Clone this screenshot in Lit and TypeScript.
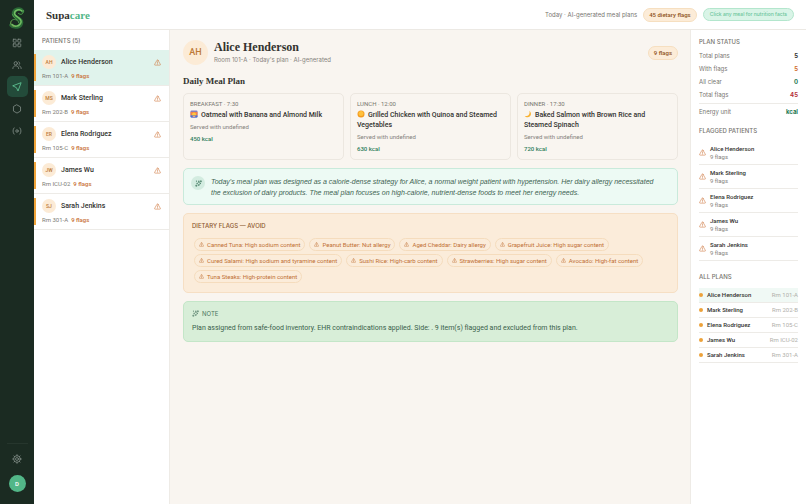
import { LitElement, html, css, svg } from "lit";
import { customElement, state } from "lit/decorators.js";
import { classMap } from "lit/directives/class-map.js";

interface Patient { name: string; initials: string; room: string; flags: number; }
interface Meal { slot: string; time: string; icon: unknown; title: string; kcal: number; }

const patients: Patient[] = [
  { name: "Alice Henderson", initials: "AH", room: "101-A", flags: 9 },
  { name: "Mark Sterling", initials: "MS", room: "202-B", flags: 9 },
  { name: "Elena Rodriguez", initials: "ER", room: "105-C", flags: 9 },
  { name: "James Wu", initials: "JW", room: "ICU-02", flags: 9 },
  { name: "Sarah Jenkins", initials: "SJ", room: "301-A", flags: 9 },
];

const line = (body: unknown) => html`<svg class="icon" viewBox="0 0 24 24" aria-hidden="true">${body}</svg>`;

const warning = line(svg`<path d="M13.7 4.2 21.6 18a2 2 0 0 1-1.700 3H4.100a2 2 0 0 1-1.700-3L10.300 4.200a2 2 0 0 1 3.400 0Z"/><path d="M12 9.500v4.500M12 17.200v.3"/>`);
const sparkle = line(svg`<path d="M13 4c.6 5 2 7 7.500 8-5.500 1-6.900 3-7.500 8-.6-5-2-7-7.500-8 5.500-1 6.900-3 7.500-8Z"/><path d="M20 2v5M17.500 4.500h5M4.500 17v5M2 19.500h5M5 3v3"/>`);
const grid = line(svg`<rect x="3" y="3" width="7" height="7" rx="1"/><rect x="14" y="3" width="7" height="7" rx="1"/><rect x="3" y="14" width="7" height="7" rx="1"/><rect x="14" y="14" width="7" height="7" rx="1"/>`);
const people = line(svg`<circle cx="9" cy="8" r="4"/><path d="M2 20.500c0-4 3-6.500 7-6.500s7 2.500 7 6.500M16 4.300a4 4 0 0 1 0 7.400M18.500 14.500c2.300 1 3.500 3.200 3.500 6"/>`);
const send = line(svg`<path d="M21.500 2.500 14.500 21.500l-4-8-8-4Z"/>`);
const hexagon = line(svg`<path d="M12 2.200 20.500 7v10L12 21.800 3.500 17V7Z"/>`);
const signal = line(svg`<circle cx="12" cy="12" r="3"/><path d="M5 4.500c-3.500 4-3.500 11 0 15M19 4.500c3.500 4 3.500 11 0 15"/>`);
const gear = line(svg`<circle cx="12" cy="12" r="3.500"/><circle cx="12" cy="12" r="8"/><path d="M12 1.500V4M12 20v2.500M1.500 12H4M20 12h2.500M4.600 4.600l1.700 1.700M17.700 17.700l1.700 1.700M4.600 19.400l1.700-1.700M17.700 6.300l1.700-1.700"/>`);

const sunrise = html`<svg class="emoji" viewBox="0 0 16 16" aria-hidden="true">
  <rect x="1" y="1" width="14" height="14" rx="2" fill="#8a7fb8"/><path d="M1 4h14v7H1Z" fill="#f5824b"/>
  <circle cx="8" cy="9" r="4" fill="#ffc83d"/><path d="M1 11h14v2a2 2 0 0 1-2 2H3a2 2 0 0 1-2-2Z" fill="#4a6fd0"/><path d="M5 12h6l-1 2H6Z" fill="#f0a08a"/></svg>`;
const sun = html`<svg class="emoji" viewBox="0 0 16 16" aria-hidden="true">
  <circle cx="8" cy="8" r="7" fill="#f39a1e"/><circle cx="8" cy="7" r="5" fill="#ffc03c"/></svg>`;
const moon = html`<svg class="emoji" viewBox="0 0 16 16" aria-hidden="true">
  <path d="M10.500 1.500c4 3 4.500 8 1.500 11s-8 2.500-10.500-.5c4 .5 7-.5 8.500-3s1.500-5 .5-7.500Z" fill="#f9b233"/></svg>`;

const meals: Meal[] = [
  { slot: "BREAKFAST", time: "7:30", icon: sunrise, title: "Oatmeal with Banana and Almond Milk", kcal: 450 },
  { slot: "LUNCH", time: "12:00", icon: sun, title: "Grilled Chicken with Quinoa and Steamed Vegetables", kcal: 630 },
  { slot: "DINNER", time: "17:30", icon: moon, title: "Baked Salmon with Brown Rice and Steamed Spinach", kcal: 720 },
];

const avoid = [
  "Canned Tuna: High sodium content", "Peanut Butter: Nut allergy", "Aged Cheddar: Dairy allergy",
  "Grapefruit Juice: High sugar content", "Cured Salami: High sodium and tyramine content",
  "Sushi Rice: High-carb content", "Strawberries: High sugar content", "Avocado: High-fat content",
  "Tuna Steaks: High-protein content",
];

const nav = [
  { label: "Dashboard", icon: grid }, { label: "Patients", icon: people }, { label: "Meal plans", icon: send },
  { label: "Inventory", icon: hexagon }, { label: "Monitoring", icon: signal },
];

const shared = css`
  *, *::before { box-sizing: border-box; }
  h1, h2, h3, p, ul, dl, dd { margin: 0; padding: 0; }
  ul { list-style: none; }
  button { font: inherit; color: inherit; background: none; border: 0; margin: 0; padding: 0; text-align: left; cursor: pointer; }
  .icon { display: block; flex: none; width: 7px; height: 7px; fill: none; stroke: currentColor; stroke-width: 2; stroke-linecap: round; stroke-linejoin: round; }
  .label { font: 500 6px/8px Inter, sans-serif; color: #77756f; }
  .pill { flex: none; border: 1px solid #f6dfc0; border-radius: 8px; background: #fcecd8; color: #8f5220; font: 500 6px/12px Roboto, sans-serif; padding: 0 5px; }
`;

@customElement("side-nav")
export class SideNav extends LitElement {
  static styles = [shared, css`
    :host { display: flex; flex-direction: column; align-items: center; width: 34px; padding: 7px 0 12px; background: #1b2b22; color: #7f8c85; }
    .logo { width: 18px; height: 22px; margin-bottom: 3px; }
    .items { display: flex; flex-direction: column; gap: 1px; }
    .item { display: grid; place-items: center; width: 21px; height: 21px; border-radius: 5px; color: inherit; }
    .item.on { background: #234b3a; color: #62c997; }
    .icon { width: 10px; height: 10px; }
    .foot { display: flex; flex-direction: column; align-items: center; gap: 6px; margin-top: auto; padding-top: 4px; border-top: 1px solid #26362d; }
    .user { width: 17px; height: 17px; border-radius: 50%; background: #52b788; color: #fff; font: 500 6px/17px Roboto, sans-serif; text-align: center; }
  `];
  render() {
    return html`
      <svg class="logo" viewBox="0 0 36 44" role="img" aria-label="Supacare">
        <path d="M29 8C25 1 12 4 11 13s17 8 16 18-15 12-21 5" fill="none" stroke="#2b6b37" stroke-width="7" stroke-linecap="round"/>
        <path d="M28 8C23 3 13 6 13 13s16 9 13 18-14 9-18 4" fill="none" stroke="#72bf63" stroke-width="3" stroke-linecap="round"/>
        <path d="M31 7c0 9-6 9-10 6M5 34c-1-8 6-11 12-8M9 15c1 9 12 8 13 17" fill="none" stroke="#4c9c4b" stroke-width="2" stroke-linecap="round"/>
        <path d="M8 27c-5 6-1 12 6 12" fill="none" stroke="#8a8f4c" stroke-width="1"/>
      </svg>
      <nav class="items" aria-label="Main">
        ${nav.map((n, i) => html`<a class=${classMap({ item: true, on: i === 2 })} href="#" aria-label=${n.label}>${n.icon}</a>`)}
      </nav>
      <div class="foot">
        <button class="item" aria-label="Settings">${gear}</button>
        <button class="user" aria-label="Account">D</button>
      </div>`;
  }
}

@customElement("app-root")
export class AppRoot extends LitElement {
  @state() selected = 0;

  static styles = [shared, css`
    :host { display: flex; min-height: 100vh; background: #fff; color: #33332f; font: 400 7px/10px Roboto, sans-serif; }
    side-nav { flex: none; }
    .page { flex: 1; min-width: 0; display: flex; flex-direction: column; }
    header { display: flex; align-items: center; gap: 6px; height: 30px; padding: 0 12px; border-bottom: 1px solid #ece9e4; }
    .brand { font: 700 11px/14px "Liberation Serif", serif; margin-right: auto; }
    .brand .tail { color: #52b788; }
    .today { font: 400 6px/9px Inter, sans-serif; color: #77756f; }
    .pill.hint { padding: 0 6px; border-color: #b3e6cd; background: #d9f4e7; color: #6cc59b; font: 500 5px/11px Inter, sans-serif; }
    .body { flex: 1; display: grid; grid-template-columns: 136px minmax(0, 1fr) 116px; }

    .list { border-right: 1px solid #eeebe6; }
    .list .label { padding: 7px 8px 5px; }
    .patient { position: relative; display: flex; flex-direction: column; gap: 2px; width: 100%; padding: 5px 8px; border-bottom: 1px solid #edebe7; }
    .patient::before { content: ""; position: absolute; left: 0; top: 4px; bottom: 4px; width: 2px; background: #f0a43a; }
    .patient.on { background: #e0f3ec; }
    .who { display: flex; align-items: center; gap: 5px; font-weight: 500; }
    .who .icon { margin-left: auto; color: #d07a42; }
    .face { flex: none; width: 14px; height: 14px; border-radius: 50%; background: #fcebd6; color: #bd7a38; font: 500 5px/14px Roboto, sans-serif; text-align: center; }
    .meta { display: flex; gap: 3px; font-size: 6px; line-height: 9px; color: #7d7b76; }
    .meta .count { color: #c87034; font-weight: 500; }

    main { display: flex; flex-direction: column; gap: 8px; padding: 10px 12px 10px 13px; background: #f9f5f0; }
    .head { display: flex; align-items: center; gap: 6px; margin-bottom: 2px; }
    .head .face { width: 25px; height: 25px; font-size: 9px; line-height: 25px; }
    .head h1 { font: 700 12px/15px "Liberation Serif", serif; }
    .head .sub { font: 400 6px/10px Inter, sans-serif; color: #85827c; }
    .head .pill { margin-left: auto; }
    h2.plan { font: 700 9px/12px "Liberation Serif", serif; margin-bottom: -2px; }
    .meals { display: grid; grid-template-columns: repeat(3, minmax(0, 1fr)); gap: 6px; }
    .meal { display: flex; flex-direction: column; justify-content: flex-start; padding: 6px; border: 1px solid #ece7e0; border-radius: 5px; }
    .meal .label { font: 400 6px/8px Roboto, sans-serif; }
    .meal .title { margin: 2px 0; font-weight: 500; }
    .emoji { width: 8px; height: 8px; margin-right: 3px; vertical-align: -1px; }
    .meal .with { font-size: 6px; line-height: 9px; color: #85827c; }
    .meal .kcal { margin-top: 3px; font-size: 6px; line-height: 9px; font-weight: 500; color: #2d7d5a; }
    .summary { display: flex; gap: 6px; padding: 7px 16px 6px 7px; border: 1px solid #c9eadb; border-radius: 5px; background: #edfaf4; color: #3d6352; font: italic 400 7px/11px "Liberation Sans", sans-serif; }
    .spark { flex: none; display: grid; place-items: center; width: 14px; height: 14px; border-radius: 50%; background: #d3ece0; color: #2d6a4f; }
    .flags { padding: 8px; border: 1px solid #f6dfc4; border-radius: 5px; background: #fbecda; }
    .flags .label { color: #8f5a30; }
    .chips { display: flex; flex-wrap: wrap; gap: 3px 4px; padding: 8px 2px 0; margin-bottom: 1px; }
    .chip { display: flex; align-items: center; gap: 3px; padding: 0 4px; border: 1px solid #f5dcbd; border-radius: 7px; color: #bf7034; font-size: 6px; line-height: 11px; }
    .chip .icon { width: 5px; height: 5px; }
    .note { padding: 8px; border: 1px solid #c4e6c8; border-radius: 5px; background: #d8eed8; color: #38614b; }
    .note .label { display: flex; gap: 3px; color: #4a7560; font-weight: 400; margin-bottom: 5px; }

    aside { padding: 8px; border-left: 1px solid #eeebe6; }
    .stats { display: flex; flex-direction: column; gap: 4px; margin: 5px 0 11px; font: 400 6px/9px Inter, sans-serif; color: #77756f; }
    .stat { display: flex; justify-content: space-between; }
    .stat dd { font-weight: 700; color: #33332f; }
    .stat .orange { color: #cf6b2c; }
    .stat .green { color: #1f7a55; }
    .stat .red { color: #b5343a; }
    .stat.unit { border-top: 1px solid #edebe7; padding-top: 3px; }
    .flagged { margin: 6px 0 12px; font-size: 6px; }
    .flagged li { display: flex; align-items: center; gap: 4px; padding: 3px 0; border-bottom: 1px solid #edebe7; color: #cf7a44; }
    .flagged .name { font-weight: 500; line-height: 9px; color: #33332f; }
    .flagged .num { line-height: 8px; color: #85827c; }
    .all { margin-top: 7px; font-size: 6px; }
    .all li { display: flex; align-items: center; gap: 4px; height: 15px; border-bottom: 1px solid #edebe7; font-weight: 500; }
    .all li.on { background: #f0f9f5; }
    .dot { width: 4px; height: 4px; border-radius: 50%; background: #eda23a; }
    .all .room { margin-left: auto; font-weight: 400; color: #b1afaa; }
  `];

  render() {
    const p = patients[this.selected];
    return html`
      <side-nav></side-nav>
      <div class="page">
        <header>
          <div class="brand">Supa<span class="tail">care</span></div>
          <span class="today">Today · AI-generated meal plans</span>
          <span class="pill">45 dietary flags</span>
          <span class="pill hint">Click any meal for nutrition facts</span>
        </header>
        <div class="body">
          <section class="list">
            <h2 class="label">PATIENTS (5)</h2>
            ${patients.map((x, i) => html`
              <button class=${classMap({ patient: true, on: i === this.selected })} @click=${() => (this.selected = i)}>
                <span class="who"><span class="face">${x.initials}</span>${x.name}${warning}</span>
                <span class="meta"><span>Rm ${x.room}</span><span class="count">${x.flags} flags</span></span>
              </button>`)}
          </section>
          <main>
            <div class="head">
              <span class="face">${p.initials}</span>
              <div><h1>${p.name}</h1><p class="sub">Room ${p.room} · Today's plan · AI-generated</p></div>
              <span class="pill">${p.flags} flags</span>
            </div>
            <h2 class="plan">Daily Meal Plan</h2>
            <div class="meals">
              ${meals.map((m) => html`
                <button class="meal">
                  <span class="label">${m.slot} · ${m.time}</span>
                  <span class="title">${m.icon}${m.title}</span>
                  <span class="with">Served with undefined</span>
                  <span class="kcal">${m.kcal} kcal</span>
                </button>`)}
            </div>
            <div class="summary">
              <span class="spark">${sparkle}</span>
              <p>Today's meal plan was designed as a calorie-dense strategy for Alice, a normal weight patient with hypertension. Her dairy allergy necessitated the exclusion of dairy products. The meal plan focuses on high-calorie, nutrient-dense foods to meet her energy needs.</p>
            </div>
            <section class="flags">
              <h3 class="label">DIETARY FLAGS — AVOID</h3>
              <ul class="chips">${avoid.map((a) => html`<li class="chip">${warning}${a}</li>`)}</ul>
            </section>
            <section class="note">
              <h3 class="label">${sparkle}NOTE</h3>
              <p>Plan assigned from safe-food inventory. EHR contraindications applied. Side: . 9 item(s) flagged and excluded from this plan.</p>
            </section>
          </main>
          <aside>
            <h2 class="label">PLAN STATUS</h2>
            <dl class="stats">
              <div class="stat"><dt>Total plans</dt><dd>5</dd></div>
              <div class="stat"><dt>With flags</dt><dd class="orange">5</dd></div>
              <div class="stat"><dt>All clear</dt><dd class="green">0</dd></div>
              <div class="stat"><dt>Total flags</dt><dd class="red">45</dd></div>
              <div class="stat unit"><dt>Energy unit</dt><dd class="green">kcal</dd></div>
            </dl>
            <h2 class="label">FLAGGED PATIENTS</h2>
            <ul class="flagged">
              ${patients.map((x) => html`<li>${warning}<div><p class="name">${x.name}</p><p class="num">${x.flags} flags</p></div></li>`)}
            </ul>
            <h2 class="label">ALL PLANS</h2>
            <ul class="all">
              ${patients.map((x, i) => html`<li class=${classMap({ on: i === this.selected })}><span class="dot"></span>${x.name}<span class="room">Rm ${x.room}</span></li>`)}
            </ul>
          </aside>
        </div>
      </div>`;
  }
}
